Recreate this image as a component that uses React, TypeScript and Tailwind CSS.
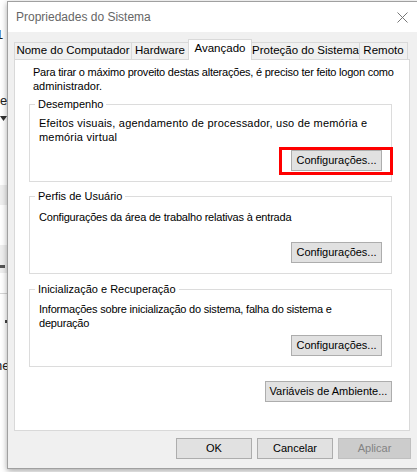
import React from "react";

type BtnProps = {
  children: React.ReactNode;
  className?: string;
  disabled?: boolean;
};

const WinButton = ({ children, className = "", disabled = false }: BtnProps) => (
  <button
    disabled={disabled}
    className={`h-[21px] border text-[11px] leading-none whitespace-nowrap ${
      disabled
        ? "border-[#bfbfbf] bg-[#cccccc] text-[#838383]"
        : "border-[#adadad] bg-[#e1e1e1] text-black"
    } ${className}`}
  >
    {children}
  </button>
);

const tabs = [
  { label: "Nome do Computador", cls: "w-[117px] h-[18px] border-l border-t border-b bg-[#f0f0f0]" },
  { label: "Hardware", cls: "w-[57px] h-[18px] border-l border-t border-b bg-[#f0f0f0]" },
  { label: "Avançado", cls: "w-[64px] h-[21px] border-x border-t bg-white pb-[2px]" },
  { label: "Proteção do Sistema", cls: "w-[107px] h-[18px] border-t border-b bg-[#f0f0f0]" },
  { label: "Remoto", cls: "w-[49px] h-[18px] border-x border-t border-b bg-[#f0f0f0]" },
];

// group box: legend over the top border, text at top, button at bottom right
const GroupBox = ({
  title,
  lines,
  pad,
  track,
  highlight = false,
}: {
  title: string;
  lines: string[];
  pad: string;
  track: string;
  highlight?: boolean;
}) => (
  <fieldset className="ml-[14px] w-[363px] border border-[#dcdcdc] pl-[9px] pr-[9px]">
    <legend className="-ml-[4px] px-[3px] leading-[14px]">{title}</legend>
    <div className={`h-[70px] flex flex-col pb-[10px] ${pad}`}>
      <p className={`leading-[14px] whitespace-nowrap ${track}`}>
        {lines.map((l, i) => (
          <React.Fragment key={i}>
            {l}
            {i < lines.length - 1 && <br />}
          </React.Fragment>
        ))}
      </p>
      <div className="mt-auto self-end relative">
        <WinButton className="w-[91px]">Configurações...</WinButton>
        {highlight && (
          <div className="absolute -left-[12px] -right-[11px] -top-[3px] -bottom-[4px] border-[3px] border-[#ff0000] pointer-events-none" />
        )}
      </div>
    </div>
  </fieldset>
);

export default function App() {
  return (
    <div className="w-[417px] h-[472px] overflow-hidden bg-white flex font-['Liberation_Sans',Arial,sans-serif] text-[11px] text-black">
      {/* bits of the window behind */}
      <div className="w-[7px] shrink-0 overflow-hidden flex flex-col text-[#222] text-[13px]">
        <div className="h-[28px] shrink-0" />
        <div className="h-[14px] shrink-0 leading-[14px] -ml-[4px] whitespace-nowrap">1</div>
        <div className="h-[52px] shrink-0" />
        <div className="h-[14px] shrink-0 leading-[14px] whitespace-nowrap">e</div>
        <div className="h-[8px] shrink-0" />
        <svg width="7" height="5" viewBox="0 0 7 5" className="shrink-0">
          <path d="M0 0 H7 L3.5 5 Z" fill="#333" />
        </svg>
        <div className="h-[64px] shrink-0" />
        <div className="h-[20px] shrink-0 bg-[#efefef]" />
        <div className="h-[40px] shrink-0" />
        <div className="h-[28px] shrink-0 bg-[#efefef] flex items-end pb-[5px]">
          <div className="w-[5px] h-[3px] bg-[#555]" />
        </div>
        <div className="h-[20px] shrink-0" />
        <div className="h-px shrink-0 bg-[#d6d6d6]" />
        <div className="h-[26px] shrink-0" />
        <div className="h-[3px] shrink-0 flex justify-end">
          <div className="w-[2px] h-[3px] bg-[#444]" />
        </div>
        <div className="h-[36px] shrink-0" />
        <div className="h-[14px] shrink-0 leading-[14px] -ml-[5px] whitespace-nowrap">ne</div>
      </div>

      {/* dialog */}
      <div className="mt-px h-[468px] w-[412px] shrink-0 border border-[#a0a0a0] bg-[#f0f0f0] flex flex-col shadow-[0_2px_6px_rgba(0,0,0,0.35)]">
        <div className="h-[30px] shrink-0 bg-white flex items-center justify-between pl-[8px] pr-[10px]">
          <span className="text-[12px] text-[#666]">Propriedades do Sistema</span>
          <svg width="11" height="11" viewBox="0 0 11 11">
            <path d="M0.5 0.5 L10.5 10.5 M10.5 0.5 L0.5 10.5" stroke="#777" strokeWidth="1" />
          </svg>
        </div>

        <div className="flex flex-col px-[6px] pt-[7px]">
          <div className="flex items-end h-[21px] -mb-px relative z-10 text-[11.5px]">
            {tabs.map((t) => (
              <div
                key={t.label}
                className={`${t.cls} border-[#d9d9d9] flex items-center justify-center whitespace-nowrap leading-none`}
              >
                {t.label}
              </div>
            ))}
          </div>

          <div className="h-[372px] w-[396px] border border-[#d9d9d9] bg-white flex flex-col pt-[5px]">
            <p className="pl-[18px] leading-[14px] whitespace-nowrap">
              <span className="tracking-[-0.22px]">
                Para tirar o máximo proveito destas alterações, é preciso ter feito logon como
              </span>
              <br />
              administrador.
            </p>

            <div className="mt-[4px]">
              <GroupBox
                title="Desempenho"
                pad="pt-[5px]"
                track="tracking-[0.2px]"
                highlight
                lines={["Efeitos visuais, agendamento de processador, uso de memória e", "memória virtual"]}
              />
            </div>
            <div className="mt-[7px]">
              <GroupBox
                title="Perfis de Usuário"
                pad="pt-[7px]"
                track="tracking-[-0.2px]"
                lines={["Configurações da área de trabalho relativas à entrada"]}
              />
            </div>
            <div className="mt-[8px]">
              <GroupBox
                title="Inicialização e Recuperação"
                pad="pt-[6px]"
                track="tracking-[-0.2px]"
                lines={["Informações sobre inicialização do sistema, falha do sistema e", "depuração"]}
              />
            </div>

            <div className="ml-[14px] w-[363px] mt-[14px] flex justify-end">
              <WinButton className="w-[127px]">Variáveis de Ambiente...</WinButton>
            </div>
          </div>

          <div className="flex justify-end gap-[5px] pr-[1px] mt-[7px]">
            <WinButton className="w-[76px]">OK</WinButton>
            <WinButton className="w-[76px]">Cancelar</WinButton>
            <WinButton className="w-[73px]" disabled>
              Aplicar
            </WinButton>
          </div>
        </div>
      </div>
    </div>
  );
}
